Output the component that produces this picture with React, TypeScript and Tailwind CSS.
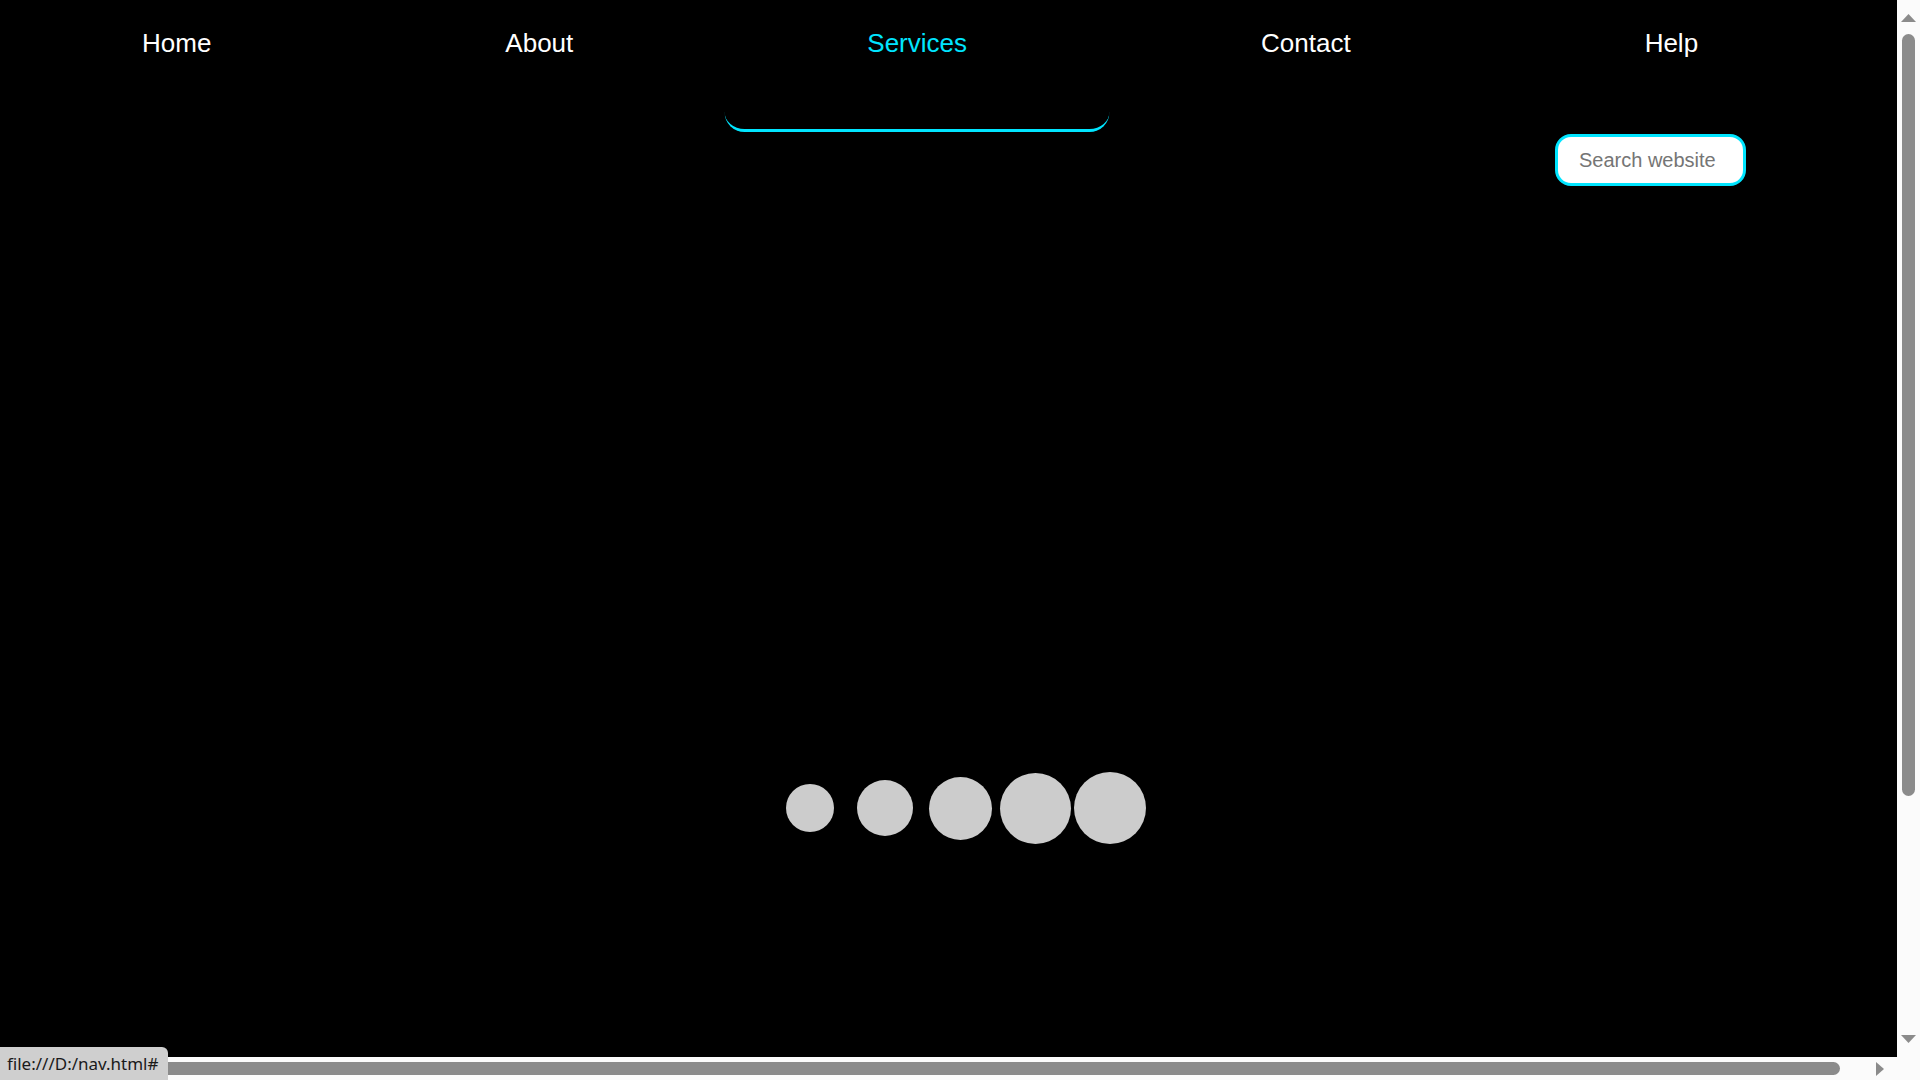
import React from 'react'

const links = ['Home', 'About', 'Services', 'Contact', 'Help']
const active = 'Services'

// the loader dots, each sits in a 75px slot
const dots = [48, 56, 63, 71, 72]

function Arrow({ dir }: { dir: 'up' | 'down' | 'left' | 'right' }) {
  const pts = {
    up: '0,8 7.5,0 15,8',
    down: '0,0 15,0 7.5,8',
    left: '8,0 8,14 0,7',
    right: '0,0 8,7 0,14',
  }[dir]
  const vertical = dir === 'up' || dir === 'down'
  return (
    <svg width={vertical ? 15 : 8} height={vertical ? 8 : 14} viewBox={vertical ? '0 0 15 8' : '0 0 8 14'}>
      <polygon points={pts} fill="#8b8b8b" />
    </svg>
  )
}

export default function App() {
  return (
    <div className="relative flex h-[1080px] w-[1920px] flex-col overflow-hidden bg-black font-['Liberation_Sans',Arial,sans-serif]">
      <div className="flex h-[1057px]">
        <main className="h-full w-[1897px] overflow-hidden">
          <div className="w-[1920px]">
            <nav>
              <ul className="flex gap-[294px] pl-[142px] pt-[24px]">
                {links.map((link) => (
                  <li key={link} className="relative">
                    <a
                      href="#"
                      className={`text-[26px] leading-[39px] ${link === active ? 'text-[#00e5ff]' : 'text-white'}`}
                    >
                      {link}
                    </a>
                    {link === active && (
                      <span className="absolute left-1/2 top-[68px] h-[40px] w-[385px] -translate-x-1/2 rounded-[20px] border-b-[3px] border-[#00e5ff]" />
                    )}
                  </li>
                ))}
              </ul>
            </nav>

            <div className="mt-[71px] flex justify-end pr-[174px]">
              <input
                type="text"
                placeholder="Search website"
                className="h-[52px] w-[191px] rounded-[16px] border-[3px] border-[#00e5ff] bg-white pl-[21px] text-[20px] text-[#333] outline-none placeholder:text-[#757575]"
              />
            </div>

            <div className="mt-[582px] flex h-[80px] items-center justify-center">
              {dots.map((size, i) => (
                <div key={i} className="flex w-[75px] justify-center">
                  <div className="rounded-full bg-[#cccccc]" style={{ width: size, height: size }} />
                </div>
              ))}
            </div>
          </div>
        </main>

        <div className="flex w-[23px] flex-col items-center bg-[#fbfbfb]">
          <div className="mt-[14px]">
            <Arrow dir="up" />
          </div>
          <div className="mt-[12px] h-[762px] w-[13px] rounded-full bg-[#8b8b8b]" />
          <div className="mt-[239px]">
            <Arrow dir="down" />
          </div>
        </div>
      </div>

      <div className="flex h-[23px]">
        <div className="flex w-[1897px] items-center bg-[#fbfbfb]">
          <div className="ml-[6px]">
            <Arrow dir="left" />
          </div>
          <div className="ml-[9px] h-[13px] w-[1817px] rounded-full bg-[#8b8b8b]" />
          <div className="ml-[36px]">
            <Arrow dir="right" />
          </div>
        </div>
        <div className="w-[23px] bg-[#fbfbfb]" />
      </div>

      <div className="absolute bottom-0 left-0 flex h-[33px] w-[168px] items-center rounded-tr-[6px] bg-[#cfcfcf] pl-[7px] font-['Noto_Sans',sans-serif] text-[17px] text-[#1a1a1a]">
        file:///D:/nav.html#
      </div>
    </div>
  )
}
